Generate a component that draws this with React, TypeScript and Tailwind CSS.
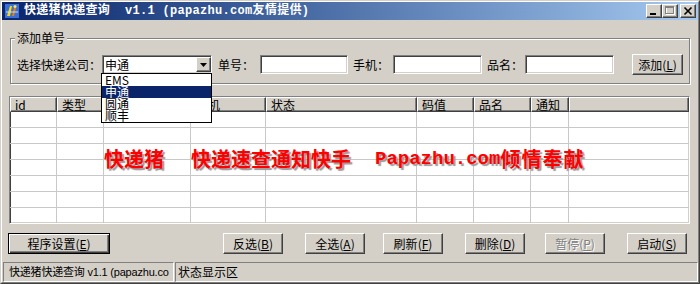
import type React from "react";

// classic win2000 bevels
const raised =
  "border border-t-white border-l-white border-r-[#404040] border-b-[#404040] shadow-[inset_-1px_-1px_0_#808080] bg-[#d4d0c8]";
const sunken =
  "border border-t-[#808080] border-l-[#808080] border-r-white border-b-white shadow-[inset_1px_1px_0_#404040,inset_-1px_-1px_0_#d4d0c8]";

const columns = ["id", "类型", "单号", "手机", "状态", "码值", "品名", "通知", ""];
const gridCols = "grid grid-cols-[47px_47px_87px_75px_151px_57px_57px_38px_1fr]";

const Btn: React.FC<{
  label: string;
  hot: string;
  className?: string;
  disabled?: boolean;
  isDefault?: boolean;
}> = ({ label, hot, className, disabled, isDefault }) => (
  <div
    className={`flex h-[21px] items-center justify-center ${
      isDefault
        ? "border border-black bg-[#d4d0c8] shadow-[inset_1px_1px_0_#fff,inset_-1px_-1px_0_#404040,inset_-2px_-2px_0_#808080]"
        : raised
    } ${disabled ? "text-[#808080] [text-shadow:1px_1px_0_#fff]" : "text-black"} ${className || ""}`}
  >
    <span>
      {label}(<span className="underline">{hot}</span>)
    </span>
  </div>
);

const CaptionBtn: React.FC<{ children: React.ReactNode; className?: string }> = ({
  children,
  className,
}) => <div className={`h-[14px] w-[16px] ${raised} ${className || ""}`}>{children}</div>;

const AppIcon = () => (
  <svg width="16" height="16" viewBox="0 0 16 16">
    <rect x="1" y="1" width="14" height="14" fill="#3a6fd8" />
    <path d="M3 13 L6 3 L8 3 L6 13 Z" fill="#ffd800" />
    <path d="M8 13 L10 5 L12 5 L10 13 Z" fill="#f08000" />
    <path d="M2 9 H14" stroke="#c0e0ff" strokeWidth="1" />
    <circle cx="11" cy="3.5" r="1.5" fill="#ffe060" />
  </svg>
);

const companies = ["EMS", "申通", "圆通", "顺丰"];

export default function App() {
  return (
    <div className="h-[284px] w-[700px] overflow-hidden border border-t-[#d4d0c8] border-l-[#d4d0c8] border-r-[#404040] border-b-[#404040] bg-[#d4d0c8] font-['Noto_Sans_CJK_SC',sans-serif] text-[12px] leading-[12px] text-black">
      <div className="flex h-full flex-col border border-t-white border-l-white border-r-[#808080] border-b-[#808080]">
        {/* title bar */}
        <div className="flex h-[18px] items-center bg-linear-to-r from-[#0a246a] to-[#a6caf0] pl-[2px] pr-[2px]">
          <AppIcon />
          <span className="ml-[4px] whitespace-pre font-['Liberation_Mono','Noto_Sans_CJK_SC',monospace] text-[12px] font-bold tracking-[0.3px] text-white">
            快递猪快递查询  v1.1 (papazhu.com友情提供)
          </span>
          <div className="ml-auto flex items-center">
            <CaptionBtn>
              <svg width="14" height="12" viewBox="0 0 14 12">
                <rect x="3" y="8" width="6" height="2" fill="#000" />
              </svg>
            </CaptionBtn>
            <CaptionBtn>
              <svg width="14" height="12" viewBox="0 0 14 12">
                <rect x="3.5" y="2.5" width="8" height="7" fill="none" stroke="#fff" />
                <rect x="2.5" y="1.5" width="8" height="7" fill="none" stroke="#808080" />
                <rect x="2" y="1" width="9" height="2" fill="#808080" />
              </svg>
            </CaptionBtn>
            <CaptionBtn className="ml-[2px]">
              <svg width="14" height="12" viewBox="0 0 14 12">
                <path d="M3.5 2.5 L10.5 9.5 M10.5 2.5 L3.5 9.5" stroke="#000" strokeWidth="1.6" />
              </svg>
            </CaptionBtn>
          </div>
        </div>

        {/* group box */}
        <div className="relative z-10 ml-[8px] mt-[18px] h-[46px] w-[680px] border border-[#808080] shadow-[inset_1px_1px_0_#fff,1px_1px_0_#fff]">
          <span className="absolute left-[4px] top-[-7px] bg-[#d4d0c8] px-[2px]">添加单号</span>
          <div className="ml-[6px] mt-[15px] flex items-center">
            <span className="w-[84px] whitespace-nowrap">选择快递公司：</span>
            <div className={`relative ml-[1px] flex h-[19px] w-[110px] items-center bg-white ${sunken}`}>
              <span className="ml-[2px]">申通</span>
              <div className={`ml-auto flex h-[15px] w-[15px] items-center justify-center ${raised}`}>
                <svg width="7" height="4" viewBox="0 0 7 4">
                  <path d="M0 0 H7 L3.5 4 Z" fill="#000" />
                </svg>
              </div>
              {/* open dropdown list */}
              <div className="absolute left-[-2px] top-[17px] w-[111px] border border-black bg-white">
                {companies.map((c) => (
                  <div
                    key={c}
                    className={`h-[12px] pl-[3px] leading-[12px] ${c === "申通" ? "bg-[#0a246a] text-white" : ""}`}
                  >
                    {c}
                  </div>
                ))}
              </div>
            </div>
            <span className="ml-[6px] w-[36px] whitespace-nowrap">单号：</span>
            <div className={`ml-[6px] h-[19px] w-[88px] bg-white ${sunken}`} />
            <span className="ml-[5px] w-[36px] whitespace-nowrap">手机：</span>
            <div className={`ml-[4px] h-[19px] w-[89px] bg-white ${sunken}`} />
            <span className="ml-[5px] w-[36px] whitespace-nowrap">品名：</span>
            <div className={`ml-[2px] h-[19px] w-[89px] bg-white ${sunken}`} />
            <Btn label="添加" hot="L" className="ml-[18px] h-[19px] w-[51px]" />
          </div>
        </div>

        {/* list view */}
        <div className={`relative ml-[7px] mt-[12px] h-[128px] w-[681px] overflow-hidden bg-white ${sunken}`}>
          <div className={gridCols}>
            {columns.map((c, i) => (
              <div key={i} className={`h-[15px] pl-[4px] leading-[13px] ${raised}`}>
                {c}
              </div>
            ))}
          </div>
          {[...Array(7)].map((_, r) => (
            <div key={r} className={gridCols}>
              {columns.map((_, i) => (
                <div
                  key={i}
                  className={`h-[16px] border-b border-[#c8c8c8] ${i < 8 ? "border-r" : ""}`}
                />
              ))}
            </div>
          ))}
          <div className="absolute left-[94px] top-[52px] flex items-center whitespace-nowrap text-[20px] font-bold leading-[20px] text-[#ff0000] [text-shadow:2px_2px_1px_#9a9a9a]">
            <span>快递猪</span>
            <span className="ml-[27px]">快递速查通知快手</span>
            <span className="ml-[24px] font-['Liberation_Mono',monospace] text-[19px]">Papazhu.com</span>
            <span className="tracking-[1px]">倾情奉献</span>
          </div>
        </div>

        {/* buttons */}
        <div className="mt-[9px] flex">
          <Btn label="程序设置" hot="E" isDefault className="ml-[6px] w-[102px]" />
          <Btn label="反选" hot="B" className="ml-[113px] w-[60px]" />
          <Btn label="全选" hot="A" className="ml-[22px] w-[60px]" />
          <Btn label="刷新" hot="F" className="ml-[18px] w-[60px]" />
          <Btn label="删除" hot="D" className="ml-[22px] w-[60px]" />
          <Btn label="暂停" hot="P" disabled className="ml-[20px] w-[60px]" />
          <Btn label="启动" hot="S" className="ml-[22px] w-[60px]" />
        </div>

        {/* status bar */}
        <div className="mt-[8px] flex h-[20px]">
          <div className="ml-[1px] flex w-[171px] items-center overflow-hidden whitespace-nowrap border border-t-[#808080] border-l-[#808080] border-r-white border-b-white pl-[5px] font-['Liberation_Sans','Noto_Sans_CJK_SC',sans-serif] text-[11px] tracking-[-0.2px]">
            快递猪快递查询 v1.1 (papazhu.co
          </div>
          <div className="ml-[1px] flex flex-1 items-center border border-t-[#808080] border-l-[#808080] border-r-white border-b-white pl-[2px]">
            状态显示区
          </div>
        </div>
      </div>
    </div>
  );
}
